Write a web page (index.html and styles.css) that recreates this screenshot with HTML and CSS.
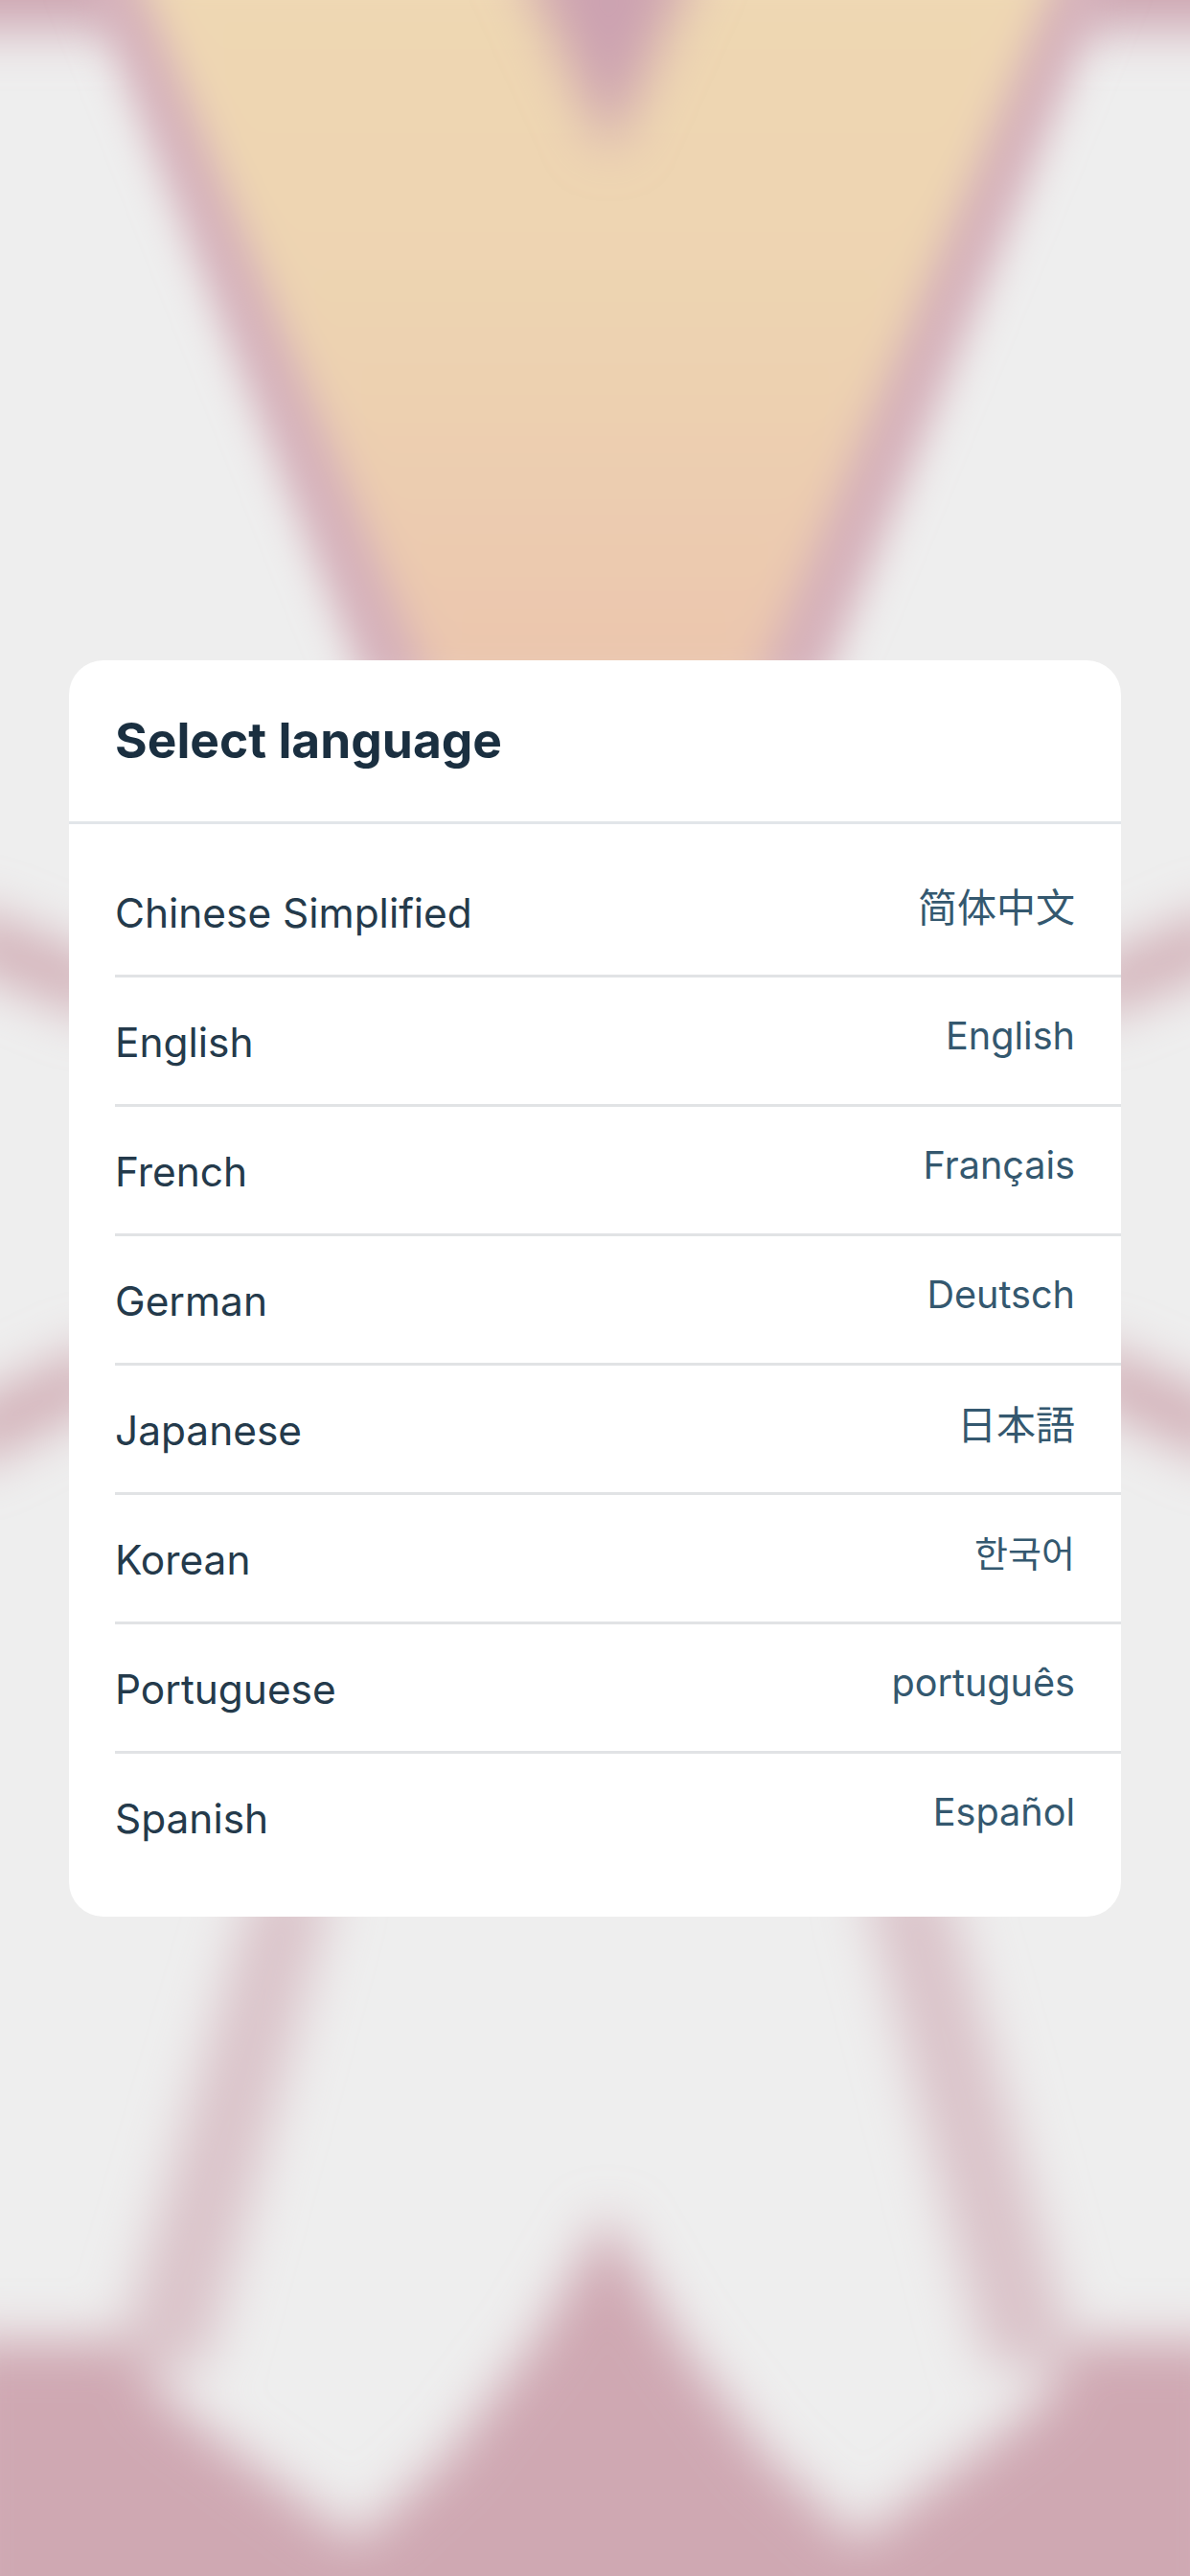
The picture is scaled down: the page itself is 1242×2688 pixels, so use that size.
FILE: index.html
```html
<!DOCTYPE html>
<html lang="en">
<head>
<meta charset="utf-8">
<title>Select language</title>
<link rel="stylesheet" href="styles.css">
</head>
<body>
<svg class="backdrop" viewBox="0 0 1242 2688" preserveAspectRatio="none" aria-hidden="true">
  <defs>
    <linearGradient id="sand" x1="0" y1="0" x2="0" y2="1">
      <stop offset="0" stop-color="#efd8b3"/>
      <stop offset="0.5" stop-color="#edd3b1"/>
      <stop offset="1" stop-color="#ebc5ae"/>
    </linearGradient>
    <filter id="soft" filterUnits="userSpaceOnUse" x="-200" y="-200" width="1642" height="3088">
      <feGaussianBlur stdDeviation="27"/>
    </filter>
    <filter id="softer" filterUnits="userSpaceOnUse" x="-200" y="-200" width="1642" height="3088">
      <feGaussianBlur stdDeviation="20"/>
    </filter>
  </defs>
  <rect x="-100" y="-100" width="1442" height="2888" fill="#eeeeee"/>
  <g filter="url(#soft)">
    <rect x="-100" y="-80" width="240" height="110" fill="#cda5b1"/>
    <rect x="1110" y="-80" width="240" height="110" fill="#cda5b1"/>
    <path d="M-40 945 L110 1005 L110 1065 L-40 1005 Z" fill="#d0acb4"/>
    <path d="M1132 1010 L1282 945 L1282 1005 L1132 1065 Z" fill="#d0acb4"/>
    <path d="M-40 1470 L110 1400 L110 1460 L-40 1535 Z" fill="#d0acb4"/>
    <path d="M1132 1400 L1282 1465 L1282 1530 L1132 1460 Z" fill="#d0acb4"/>
    <path d="M268 1960 L350 1960 L215 2470 L120 2470 Z" fill="#dac3c9"/>
    <path d="M900 1960 L985 1960 L1125 2470 L1030 2470 Z" fill="#dac3c9"/>
    <path d="M-50 2442 L135 2442 C150 2480 170 2500 200 2525 L372 2652 L470 2560 L560 2440 L634 2310 L708 2440 L798 2560 L895 2652 L1065 2525 C1095 2500 1110 2480 1125 2442 L1292 2442 V2780 H-50 Z" fill="#cfa8b2"/>
  </g>
  <g filter="url(#softer)">
    <path d="M82 -40 L383 720 L857 720 L1166 -40 Z" fill="#d5b0ba"/>
    <path d="M140 -40 L453 720 L786 720 L1108 -40 Z" fill="url(#sand)"/>
  </g>
  <g filter="url(#soft)">
    <path d="M536 -60 L734 -60 L636 160 Z" fill="#cca2b1"/>
  </g>
</svg>
<main class="sheet">
  <h1 class="sheet-title">Select language</h1>
  <ul class="lang-list">
    <li class="lang-row"><span class="lang-name">Chinese Simplified</span><span class="lang-native cjk-sc" lang="zh-Hans">简体中文</span></li>
    <li class="lang-row"><span class="lang-name">English</span><span class="lang-native">English</span></li>
    <li class="lang-row"><span class="lang-name">French</span><span class="lang-native">Français</span></li>
    <li class="lang-row"><span class="lang-name">German</span><span class="lang-native">Deutsch</span></li>
    <li class="lang-row"><span class="lang-name">Japanese</span><span class="lang-native cjk-jp" lang="ja">日本語</span></li>
    <li class="lang-row"><span class="lang-name">Korean</span><span class="lang-native cjk-kr" lang="ko">한국어</span></li>
    <li class="lang-row"><span class="lang-name">Portuguese</span><span class="lang-native">português</span></li>
    <li class="lang-row"><span class="lang-name">Spanish</span><span class="lang-native">Español</span></li>
  </ul>
</main>
</body>
</html>
```
FILE: styles.css
```css
* { box-sizing: border-box; }

html, body { margin: 0; padding: 0; }

body {
  position: relative;
  min-height: 2688px;
  overflow: hidden;
  display: flex;
  align-items: center;
  justify-content: center;
  background: #eeeeee;
  font-family: Inter, "Noto Sans", "Noto Sans CJK SC", sans-serif;
}

.backdrop {
  position: absolute;
  inset: 0;
  width: 1242px;
  height: 2688px;
}

.sheet {
  position: relative;
  width: 1098px;
  background: #ffffff;
  border-radius: 36px;
  overflow: hidden;
}

.sheet-title {
  margin: 0;
  height: 171px;
  padding: 47px 48px 0;
  border-bottom: 3px solid #e2e6e9;
  font-size: 51.5px;
  line-height: 72px;
  font-weight: 700;
  color: #1a2f40;
}

.lang-list {
  list-style: none;
  margin: 0;
  padding: 25px 0 38px 48px;
}

.lang-row {
  display: flex;
  align-items: center;
  justify-content: space-between;
  height: 135px;
  padding-right: 48px;
  border-bottom: 3px solid #e1e3e5;
}

.lang-row:last-child {
  height: 132px;
  border-bottom: 0;
}

.lang-name {
  padding-top: 4px;
  font-size: 42.4px;
  line-height: 60px;
  color: #243a4b;
}

.lang-native {
  padding-bottom: 10px;
  font-size: 39.6px;
  line-height: 56px;
  color: #34586f;
}

.cjk-sc { padding-bottom: 14px; font-family: "Noto Sans CJK SC", sans-serif; font-size: 41px; }
.cjk-jp { padding-bottom: 14px; font-family: "Noto Sans CJK JP", sans-serif; font-size: 41px; }
.cjk-kr { padding-bottom: 14px; font-family: "Noto Sans CJK KR", sans-serif; font-size: 38px; }
```
